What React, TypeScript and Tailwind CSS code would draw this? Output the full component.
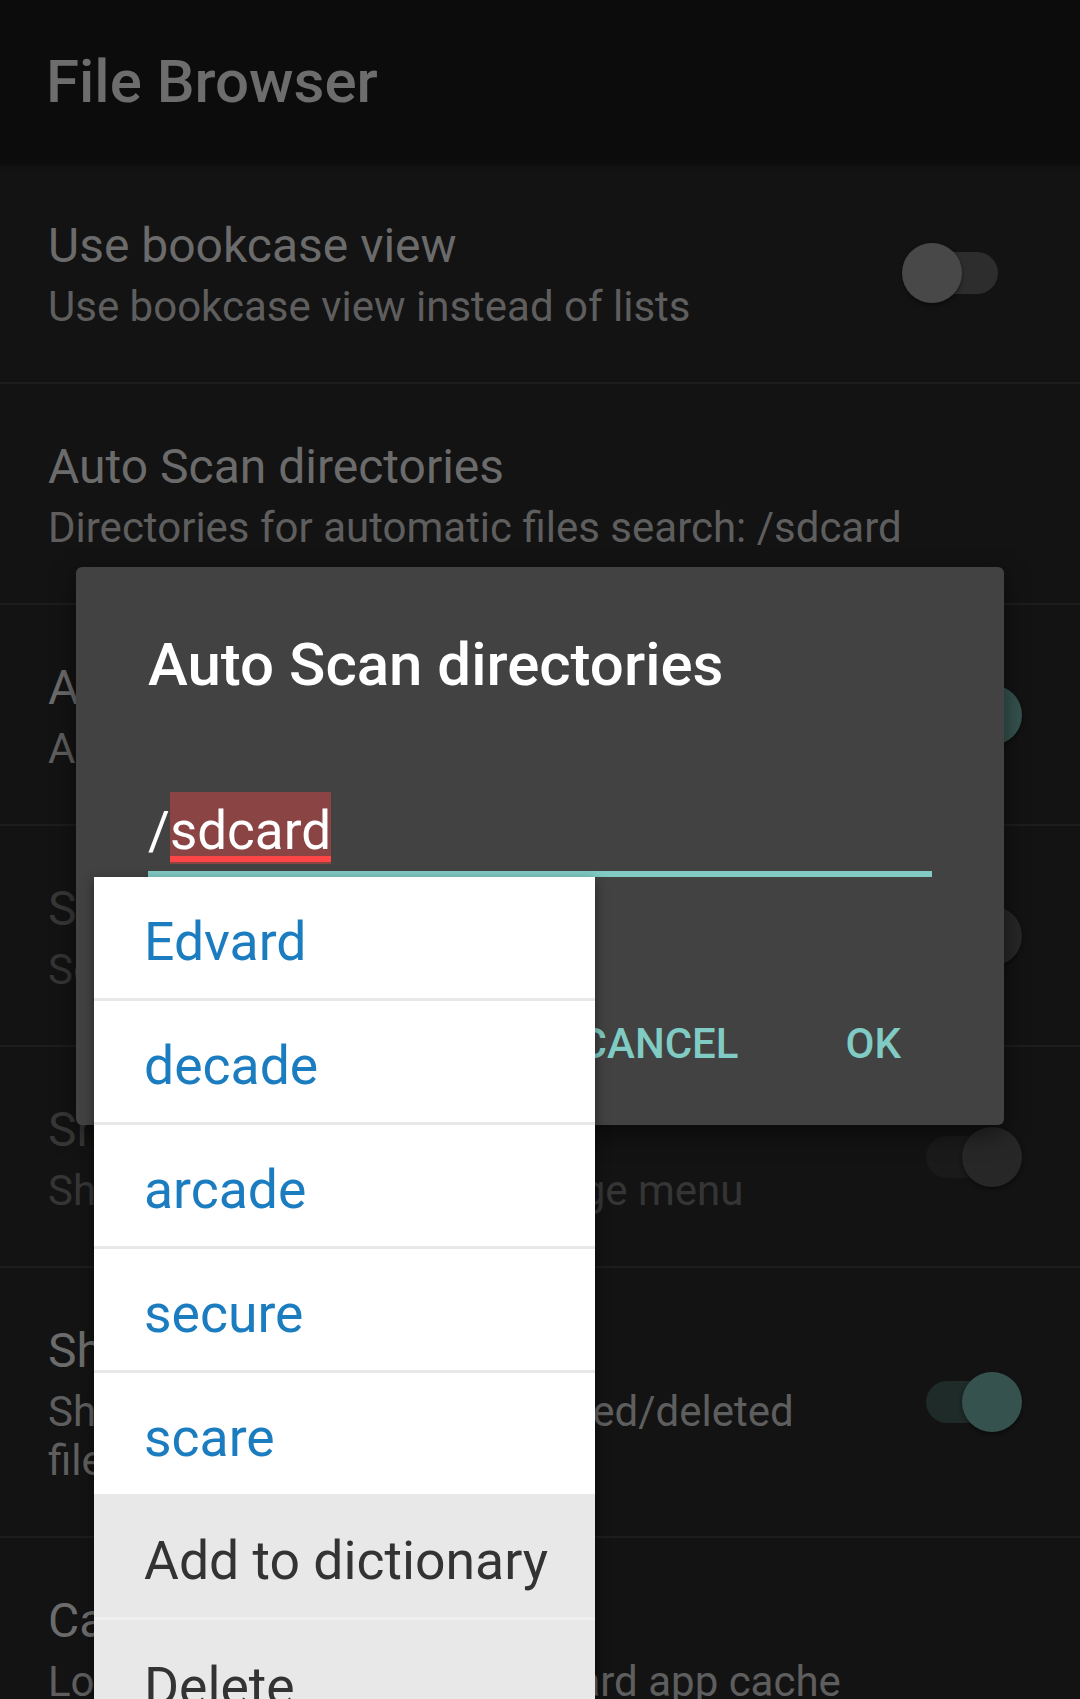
import React from "react";

type ToggleKind = "off" | "on" | "disabledOn" | null;

interface Row {
  title: string;
  subtitle: string;
  toggle: ToggleKind;
  disabled?: boolean;
}

const rows: Row[] = [
  { title: "Use bookcase view", subtitle: "Use bookcase view instead of lists", toggle: "off" },
  { title: "Auto Scan directories", subtitle: "Directories for automatic files search: /sdcard", toggle: null },
  { title: "Auto scan on start", subtitle: "Automatically scan directories on start", toggle: "on" },
  { title: "Scan subdirectories", subtitle: "Search books in subfolders", toggle: "disabledOn", disabled: true },
  { title: "Show quick scan", subtitle: "Show quick scan in the storage menu", toggle: "disabledOn", disabled: true },
  { title: "Show notifications", subtitle: "Show notifications about added/deleted files", toggle: "on" },
  { title: "Cache location", subtitle: "Location of the cache: standard app cache", toggle: null },
];

function Toggle({ kind }: { kind: Exclude<ToggleKind, null> }) {
  const track =
    kind === "off" ? "bg-[#2d2d2d]" : kind === "on" ? "bg-[#1f2b29]" : "bg-[#1a1a1a]";
  const thumb =
    kind === "off" ? "bg-[#484848]" : kind === "on" ? "bg-[#35524e]" : "bg-[#272727]";
  const pos = kind === "off" ? "left-0" : "left-[60px]";
  return (
    <div className="relative w-[119px] h-[60px] shrink-0 ml-[40px]">
      <div className={`absolute left-[24px] top-[9px] w-[72px] h-[42px] rounded-full ${track}`} />
      <div
        className={`absolute top-0 ${pos} w-[60px] h-[60px] rounded-full ${thumb} shadow-[0_2px_4px_rgba(0,0,0,0.45)]`}
      />
    </div>
  );
}

function SettingRow({ row }: { row: Row }) {
  const titleColor = row.disabled ? "text-[#373737]" : "text-[#6b6b6b]";
  const subColor = row.disabled ? "text-[#353535]" : "text-[#5e5e5e]";
  return (
    <div className="flex items-center pl-[48px] pr-[59px] border-b-2 border-[#1d1d1d]">
      <div className="flex-1 min-w-0 pt-[55px] pb-[51px]">
        <div className={`text-[48px] leading-[56px] ${titleColor}`}>{row.title}</div>
        <div className={`mt-[8px] text-[42px] leading-[49px] ${subColor}`}>{row.subtitle}</div>
      </div>
      {row.toggle && <Toggle kind={row.toggle} />}
    </div>
  );
}

const suggestions = ["Edvard", "decade", "arcade", "secure", "scare"];

export default function App() {
  return (
    <div
      className="relative w-[1080px] h-[1699px] overflow-hidden bg-[#131313]"
      style={{ fontFamily: "Roboto, 'Noto Sans', sans-serif" }}
    >
      {/* Header */}
      <div className="h-[163px] bg-[#0c0c0c] pl-[46px] pt-[47px] shadow-[0_2px_4px_rgba(0,0,0,0.4)]">
        <div className="text-[60px] leading-[70px] font-medium text-[#6d6d6d]">File Browser</div>
      </div>

      {/* Settings list */}
      <div>
        {rows.map((r) => (
          <SettingRow key={r.title} row={r} />
        ))}
      </div>

      {/* Dialog */}
      <div className="absolute left-[76px] top-[567px] w-[928px] rounded-[6px] bg-[#424242] px-[72px] pt-[63px] pb-[57px] shadow-[0_8px_24px_rgba(0,0,0,0.5)]">
        <div className="text-[60px] leading-[70px] font-medium text-white">Auto Scan directories</div>
        <div className="mt-[92px] h-[72px] leading-[78px] text-[53px] text-white whitespace-nowrap">
          <span className="align-top">/</span>
          <span className="relative inline-block align-top h-[72px] leading-[78px] bg-[#8b4444]">
            sdcard
            <span className="absolute left-0 right-0 bottom-[2px] h-[6px] bg-[#ff4646]" />
          </span>
        </div>
        <div className="mt-[7px] h-[6px] bg-[#80cbc4]" />
        <div className="mt-[142px] flex justify-end gap-[107px] pr-[31px] text-[42px] leading-[49px] font-medium text-[#80cbc4]">
          <span>CANCEL</span>
          <span>OK</span>
        </div>
      </div>

      {/* Spell-check suggestion popup */}
      <div className="absolute left-[94px] top-[877px] w-[501px] bg-white shadow-[0_4px_12px_rgba(0,0,0,0.45)]">
        {suggestions.map((s, i) => (
          <div
            key={s}
            className={`pl-[50px] pt-[8px] leading-[113px] text-[53.5px] text-[#1b7dc0] ${
              i < suggestions.length - 1 ? "h-[124px] border-b-[3px] border-[#e8e8e8]" : "h-[121px]"
            }`}
          >
            {s}
          </div>
        ))}
        <div className="bg-[#e8e8e8]">
          <div className="h-[126px] border-b-[3px] border-[#efefef] pl-[50px] pt-[10px] leading-[113px] text-[53.5px] text-[#333333]">
            Add to dictionary
          </div>
          <div className="h-[126px] pl-[50px] pt-[10px] leading-[113px] text-[53.5px] text-[#333333]">
            Delete
          </div>
        </div>
      </div>
    </div>
  );
}
